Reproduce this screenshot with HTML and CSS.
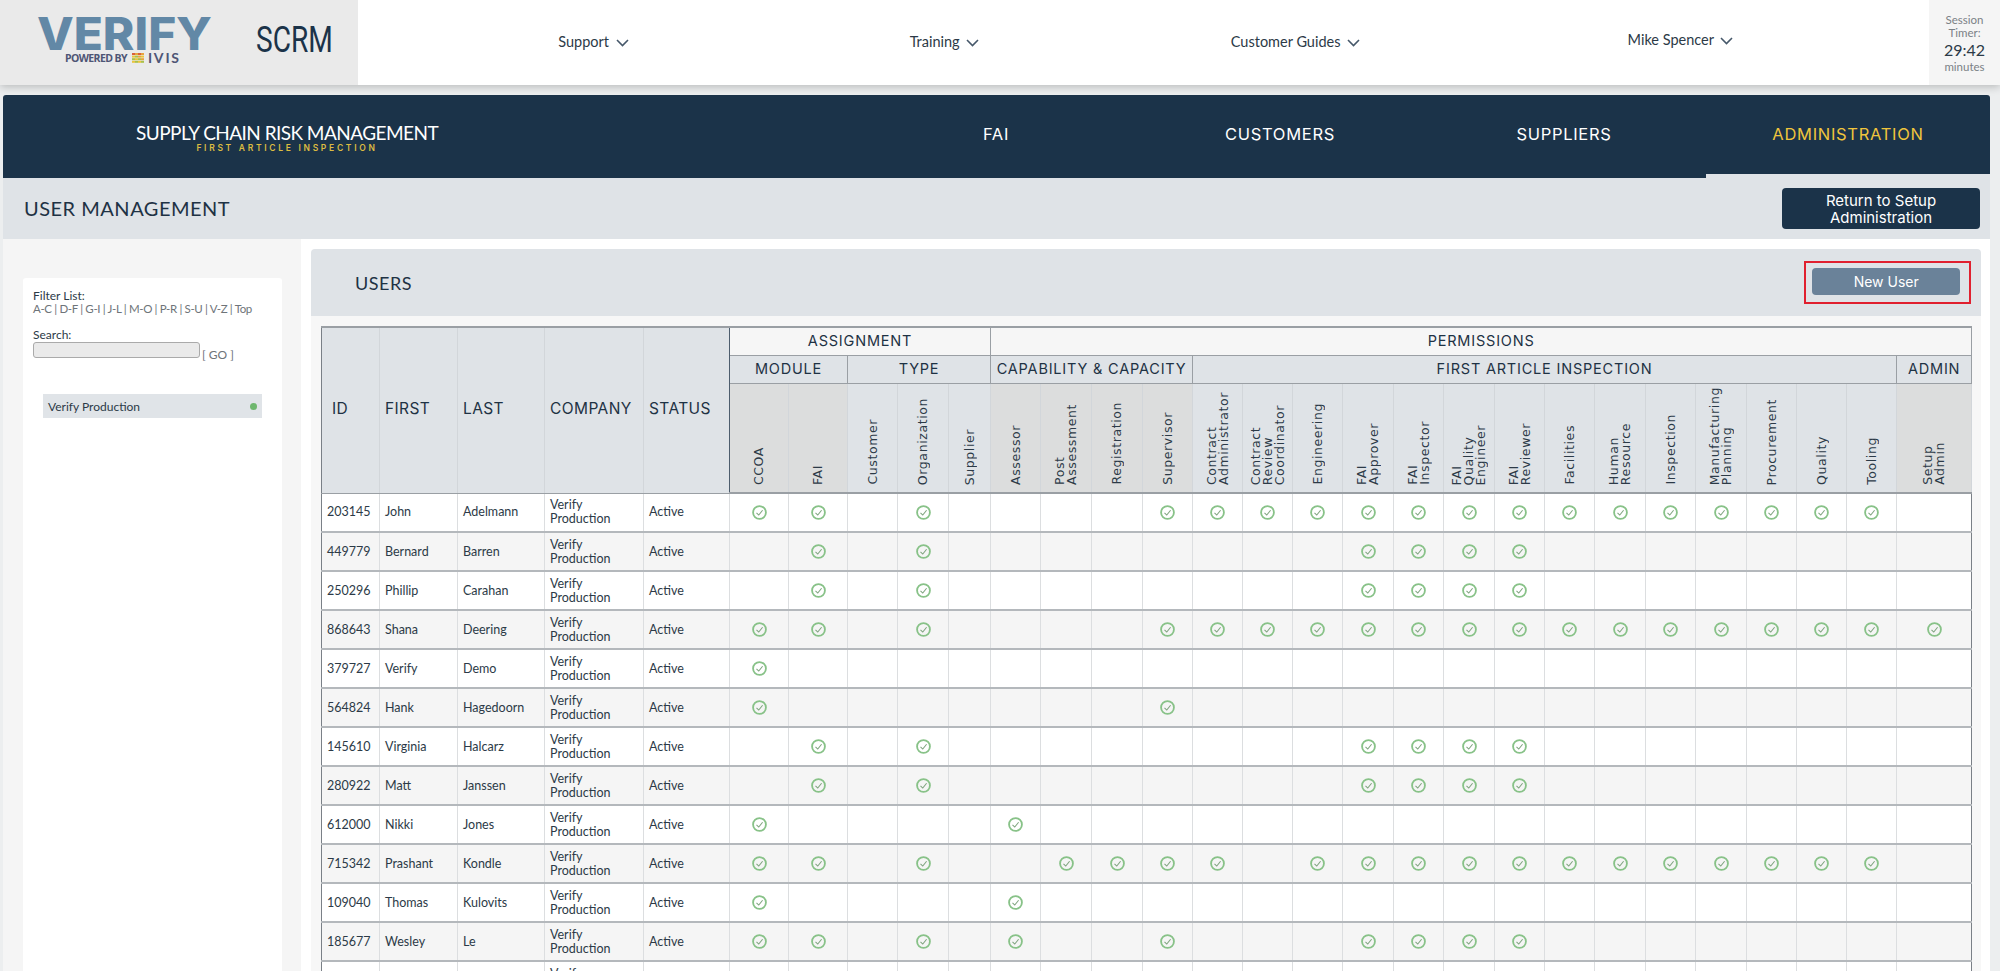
FILE: index.html

```html
<!DOCTYPE html>
<html lang="en">
<head>
    <meta charset="UTF-8">
    <meta name="viewport" content="width=device-width, initial-scale=1.0">
    <title>User Management</title>
    <link rel="stylesheet" href="styles.css">
</head>
<body>
    <svg class="defs" aria-hidden="true">
        <symbol id="ok" viewBox="0 0 14 14">
            <circle cx="7" cy="7" r="6" fill="none" stroke="#88c288" stroke-width="1.7"/>
            <path d="M4.2 7.3 6.3 9.4 9.9 4.9" fill="none" stroke="#7fa47f" stroke-width="1"/>
        </symbol>
    </svg>

    <header class="top">
        <div class="logo">
            <div class="logo-mark">
                <svg class="verify" viewBox="0 0 175 34"><text x="0" y="33" textLength="175" lengthAdjust="spacingAndGlyphs">VERIFY</text></svg>
                <div class="powered">
                    <span class="powered-by">POWERED BY</span>
                    <svg class="ivis-mark" viewBox="0 0 12 10">
                        <rect width="3" height="2" fill="#d9603b"/><rect x="3" width="3" height="2" fill="#e9a33c"/><rect x="6" width="3" height="2" fill="#d9603b"/><rect x="9" width="3" height="2" fill="#e9a33c"/>
                        <rect y="2.6" width="3" height="2" fill="#e9c53c"/><rect x="3" y="2.6" width="3" height="2" fill="#a9c04a"/><rect x="6" y="2.6" width="3" height="2" fill="#e9a33c"/><rect x="9" y="2.6" width="3" height="2" fill="#e9c53c"/>
                        <rect y="5.2" width="3" height="2" fill="#a9c04a"/><rect x="3" y="5.2" width="3" height="2" fill="#e9c53c"/><rect x="6" y="5.2" width="3" height="2" fill="#a9c04a"/><rect x="9" y="5.2" width="3" height="2" fill="#e9a33c"/>
                        <rect y="7.8" width="3" height="2" fill="#e9c53c"/><rect x="3" y="7.8" width="3" height="2" fill="#a9c04a"/><rect x="6" y="7.8" width="3" height="2" fill="#e9c53c"/><rect x="9" y="7.8" width="3" height="2" fill="#a9c04a"/>
                    </svg>
                    <span class="ivis">IVIS</span>
                </div>
            </div>
            <span class="scrm">SCRM</span>
        </div>
        <nav class="top-nav">
            <a>Support <svg class="chev" viewBox="0 0 13 8"><path d="M1 1l5.5 5.5L12 1"/></svg></a>
            <a>Training <svg class="chev" viewBox="0 0 13 8"><path d="M1 1l5.5 5.5L12 1"/></svg></a>
            <a>Customer Guides <svg class="chev" viewBox="0 0 13 8"><path d="M1 1l5.5 5.5L12 1"/></svg></a>
            <a class="user">Mike Spencer <svg class="chev" viewBox="0 0 13 8"><path d="M1 1l5.5 5.5L12 1"/></svg></a>
        </nav>
        <div class="session">
            <span>Session<br>Timer:</span>
            <strong>29:42</strong>
            <span>minutes</span>
        </div>
    </header>

    <div class="page">
        <nav class="main-nav">
            <div class="brand">
                <div class="brand-name">SUPPLY CHAIN RISK MANAGEMENT</div>
                <div class="brand-sub">FIRST ARTICLE INSPECTION</div>
            </div>
            <a class="tab">FAI</a>
            <a class="tab">CUSTOMERS</a>
            <a class="tab">SUPPLIERS</a>
            <a class="tab active">ADMINISTRATION</a>
        </nav>

        <div class="sub-bar">
            <h1>USER MANAGEMENT</h1>
            <button class="btn-dark">Return to Setup Administration</button>
        </div>

        <div class="content">
            <aside class="side">
                <div class="side-card">
                    <div class="filter">
                        <div class="label">Filter List:</div>
                        <div class="letters">A-C | D-F | G-I | J-L | M-O | P-R | S-U | V-Z | Top</div>
                    </div>
                    <div class="label search-label">Search:</div>
                    <div class="search"><input type="text"><span>[ GO ]</span></div>
                    <div class="site"><span>Verify Production</span><i class="dot"></i></div>
                </div>
            </aside>

            <main class="main">
                <div class="panel-head">
                    <h2>USERS</h2>
                    <div class="marked"><button class="btn-new">New User</button></div>
                </div>
                <div class="table-wrap">
                    <table class="users">
                        <colgroup>
                            <col class="w58"><col class="w78"><col class="w87"><col class="w99"><col class="w86">
                            <col class="w59"><col class="w59"><col class="w50"><col class="w51"><col class="w42">
                            <col class="w50"><col class="w51"><col class="w51"><col class="w50"><col class="w50"><col class="w50">
                            <col class="w50"><col class="w51"><col class="w50"><col class="w51"><col class="w50"><col class="w50">
                            <col class="w51"><col class="w50"><col class="w51"><col class="w50"><col class="w50"><col class="w50">
                            <col class="w75">
                        </colgroup>
                        <thead>
                            <tr class="h1">
                                <th class="big" rowspan="3">ID</th>
                                <th class="big" rowspan="3">FIRST</th>
                                <th class="big" rowspan="3">LAST</th>
                                <th class="big" rowspan="3">COMPANY</th>
                                <th class="big" rowspan="3">STATUS</th>
                                <th class="grp" colspan="5">ASSIGNMENT</th>
                                <th class="grp" colspan="19">PERMISSIONS</th>
                            </tr>
                            <tr class="h2">
                                <th colspan="2">MODULE</th>
                                <th colspan="3">TYPE</th>
                                <th colspan="4">CAPABILITY &amp; CAPACITY</th>
                                <th colspan="14">FIRST ARTICLE INSPECTION</th>
                                <th>ADMIN</th>
                            </tr>
                            <tr class="h3">
                                <th class="tint"><span>CCOA</span></th>
                                <th class="tint"><span>FAI</span></th>
                                <th><span>Customer</span></th>
                                <th><span>Organization</span></th>
                                <th><span>Supplier</span></th>
                                <th class="tint"><span>Assessor</span></th>
                                <th class="tint"><span>Post<br>Assessment</span></th>
                                <th class="tint"><span>Registration</span></th>
                                <th class="tint"><span>Supervisor</span></th>
                                <th><span>Contract<br>Administrator</span></th>
                                <th><span>Contract<br>Review<br>Coordinator</span></th>
                                <th><span>Engineering</span></th>
                                <th><span>FAI<br>Approver</span></th>
                                <th><span>FAI<br>Inspector</span></th>
                                <th><span>FAI<br>Quality<br>Engineer</span></th>
                                <th><span>FAI<br>Reviewer</span></th>
                                <th><span>Facilities</span></th>
                                <th><span>Human<br>Resource</span></th>
                                <th><span>Inspection</span></th>
                                <th><span>Manufacturing<br>Planning</span></th>
                                <th><span>Procurement</span></th>
                                <th><span>Quality</span></th>
                                <th><span>Tooling</span></th>
                                <th class="tint"><span>Setup<br>Admin</span></th>
                            </tr>
                        </thead>
                        <tbody>
                            <tr><td>203145</td><td>John</td><td>Adelmann</td><td>Verify Production</td><td>Active</td>
                                <td><svg class="ok"><use href="#ok"/></svg></td><td><svg class="ok"><use href="#ok"/></svg></td><td></td><td><svg class="ok"><use href="#ok"/></svg></td><td></td>
                                <td></td><td></td><td></td><td><svg class="ok"><use href="#ok"/></svg></td>
                                <td><svg class="ok"><use href="#ok"/></svg></td><td><svg class="ok"><use href="#ok"/></svg></td><td><svg class="ok"><use href="#ok"/></svg></td><td><svg class="ok"><use href="#ok"/></svg></td><td><svg class="ok"><use href="#ok"/></svg></td><td><svg class="ok"><use href="#ok"/></svg></td><td><svg class="ok"><use href="#ok"/></svg></td><td><svg class="ok"><use href="#ok"/></svg></td><td><svg class="ok"><use href="#ok"/></svg></td><td><svg class="ok"><use href="#ok"/></svg></td><td><svg class="ok"><use href="#ok"/></svg></td><td><svg class="ok"><use href="#ok"/></svg></td><td><svg class="ok"><use href="#ok"/></svg></td><td><svg class="ok"><use href="#ok"/></svg></td>
                                <td></td></tr>
                            <tr><td>449779</td><td>Bernard</td><td>Barren</td><td>Verify Production</td><td>Active</td>
                                <td></td><td><svg class="ok"><use href="#ok"/></svg></td><td></td><td><svg class="ok"><use href="#ok"/></svg></td><td></td>
                                <td></td><td></td><td></td><td></td>
                                <td></td><td></td><td></td><td><svg class="ok"><use href="#ok"/></svg></td><td><svg class="ok"><use href="#ok"/></svg></td><td><svg class="ok"><use href="#ok"/></svg></td><td><svg class="ok"><use href="#ok"/></svg></td><td></td><td></td><td></td><td></td><td></td><td></td><td></td>
                                <td></td></tr>
                            <tr><td>250296</td><td>Phillip</td><td>Carahan</td><td>Verify Production</td><td>Active</td>
                                <td></td><td><svg class="ok"><use href="#ok"/></svg></td><td></td><td><svg class="ok"><use href="#ok"/></svg></td><td></td>
                                <td></td><td></td><td></td><td></td>
                                <td></td><td></td><td></td><td><svg class="ok"><use href="#ok"/></svg></td><td><svg class="ok"><use href="#ok"/></svg></td><td><svg class="ok"><use href="#ok"/></svg></td><td><svg class="ok"><use href="#ok"/></svg></td><td></td><td></td><td></td><td></td><td></td><td></td><td></td>
                                <td></td></tr>
                            <tr><td>868643</td><td>Shana</td><td>Deering</td><td>Verify Production</td><td>Active</td>
                                <td><svg class="ok"><use href="#ok"/></svg></td><td><svg class="ok"><use href="#ok"/></svg></td><td></td><td><svg class="ok"><use href="#ok"/></svg></td><td></td>
                                <td></td><td></td><td></td><td><svg class="ok"><use href="#ok"/></svg></td>
                                <td><svg class="ok"><use href="#ok"/></svg></td><td><svg class="ok"><use href="#ok"/></svg></td><td><svg class="ok"><use href="#ok"/></svg></td><td><svg class="ok"><use href="#ok"/></svg></td><td><svg class="ok"><use href="#ok"/></svg></td><td><svg class="ok"><use href="#ok"/></svg></td><td><svg class="ok"><use href="#ok"/></svg></td><td><svg class="ok"><use href="#ok"/></svg></td><td><svg class="ok"><use href="#ok"/></svg></td><td><svg class="ok"><use href="#ok"/></svg></td><td><svg class="ok"><use href="#ok"/></svg></td><td><svg class="ok"><use href="#ok"/></svg></td><td><svg class="ok"><use href="#ok"/></svg></td><td><svg class="ok"><use href="#ok"/></svg></td>
                                <td><svg class="ok"><use href="#ok"/></svg></td></tr>
                            <tr><td>379727</td><td>Verify</td><td>Demo</td><td>Verify Production</td><td>Active</td>
                                <td><svg class="ok"><use href="#ok"/></svg></td><td></td><td></td><td></td><td></td>
                                <td></td><td></td><td></td><td></td>
                                <td></td><td></td><td></td><td></td><td></td><td></td><td></td><td></td><td></td><td></td><td></td><td></td><td></td><td></td>
                                <td></td></tr>
                            <tr><td>564824</td><td>Hank</td><td>Hagedoorn</td><td>Verify Production</td><td>Active</td>
                                <td><svg class="ok"><use href="#ok"/></svg></td><td></td><td></td><td></td><td></td>
                                <td></td><td></td><td></td><td><svg class="ok"><use href="#ok"/></svg></td>
                                <td></td><td></td><td></td><td></td><td></td><td></td><td></td><td></td><td></td><td></td><td></td><td></td><td></td><td></td>
                                <td></td></tr>
                            <tr><td>145610</td><td>Virginia</td><td>Halcarz</td><td>Verify Production</td><td>Active</td>
                                <td></td><td><svg class="ok"><use href="#ok"/></svg></td><td></td><td><svg class="ok"><use href="#ok"/></svg></td><td></td>
                                <td></td><td></td><td></td><td></td>
                                <td></td><td></td><td></td><td><svg class="ok"><use href="#ok"/></svg></td><td><svg class="ok"><use href="#ok"/></svg></td><td><svg class="ok"><use href="#ok"/></svg></td><td><svg class="ok"><use href="#ok"/></svg></td><td></td><td></td><td></td><td></td><td></td><td></td><td></td>
                                <td></td></tr>
                            <tr><td>280922</td><td>Matt</td><td>Janssen</td><td>Verify Production</td><td>Active</td>
                                <td></td><td><svg class="ok"><use href="#ok"/></svg></td><td></td><td><svg class="ok"><use href="#ok"/></svg></td><td></td>
                                <td></td><td></td><td></td><td></td>
                                <td></td><td></td><td></td><td><svg class="ok"><use href="#ok"/></svg></td><td><svg class="ok"><use href="#ok"/></svg></td><td><svg class="ok"><use href="#ok"/></svg></td><td><svg class="ok"><use href="#ok"/></svg></td><td></td><td></td><td></td><td></td><td></td><td></td><td></td>
                                <td></td></tr>
                            <tr><td>612000</td><td>Nikki</td><td>Jones</td><td>Verify Production</td><td>Active</td>
                                <td><svg class="ok"><use href="#ok"/></svg></td><td></td><td></td><td></td><td></td>
                                <td><svg class="ok"><use href="#ok"/></svg></td><td></td><td></td><td></td>
                                <td></td><td></td><td></td><td></td><td></td><td></td><td></td><td></td><td></td><td></td><td></td><td></td><td></td><td></td>
                                <td></td></tr>
                            <tr><td>715342</td><td>Prashant</td><td>Kondle</td><td>Verify Production</td><td>Active</td>
                                <td><svg class="ok"><use href="#ok"/></svg></td><td><svg class="ok"><use href="#ok"/></svg></td><td></td><td><svg class="ok"><use href="#ok"/></svg></td><td></td>
                                <td></td><td><svg class="ok"><use href="#ok"/></svg></td><td><svg class="ok"><use href="#ok"/></svg></td><td><svg class="ok"><use href="#ok"/></svg></td>
                                <td><svg class="ok"><use href="#ok"/></svg></td><td></td><td><svg class="ok"><use href="#ok"/></svg></td><td><svg class="ok"><use href="#ok"/></svg></td><td><svg class="ok"><use href="#ok"/></svg></td><td><svg class="ok"><use href="#ok"/></svg></td><td><svg class="ok"><use href="#ok"/></svg></td><td><svg class="ok"><use href="#ok"/></svg></td><td><svg class="ok"><use href="#ok"/></svg></td><td><svg class="ok"><use href="#ok"/></svg></td><td><svg class="ok"><use href="#ok"/></svg></td><td><svg class="ok"><use href="#ok"/></svg></td><td><svg class="ok"><use href="#ok"/></svg></td><td><svg class="ok"><use href="#ok"/></svg></td>
                                <td></td></tr>
                            <tr><td>109040</td><td>Thomas</td><td>Kulovits</td><td>Verify Production</td><td>Active</td>
                                <td><svg class="ok"><use href="#ok"/></svg></td><td></td><td></td><td></td><td></td>
                                <td><svg class="ok"><use href="#ok"/></svg></td><td></td><td></td><td></td>
                                <td></td><td></td><td></td><td></td><td></td><td></td><td></td><td></td><td></td><td></td><td></td><td></td><td></td><td></td>
                                <td></td></tr>
                            <tr><td>185677</td><td>Wesley</td><td>Le</td><td>Verify Production</td><td>Active</td>
                                <td><svg class="ok"><use href="#ok"/></svg></td><td><svg class="ok"><use href="#ok"/></svg></td><td></td><td><svg class="ok"><use href="#ok"/></svg></td><td></td>
                                <td><svg class="ok"><use href="#ok"/></svg></td><td></td><td></td><td><svg class="ok"><use href="#ok"/></svg></td>
                                <td></td><td></td><td></td><td><svg class="ok"><use href="#ok"/></svg></td><td><svg class="ok"><use href="#ok"/></svg></td><td><svg class="ok"><use href="#ok"/></svg></td><td><svg class="ok"><use href="#ok"/></svg></td><td></td><td></td><td></td><td></td><td></td><td></td><td></td>
                                <td></td></tr>
                            <tr><td></td><td></td><td></td><td>Verify Production</td><td>Active</td>
                                <td></td><td></td><td></td><td></td><td></td>
                                <td></td><td></td><td></td><td></td>
                                <td></td><td></td><td></td><td></td><td></td><td></td><td></td><td></td><td></td><td></td><td></td><td></td><td></td><td></td>
                                <td></td></tr>
                        </tbody>
                    </table>
                </div>
            </main>
        </div>
    </div>
</body>
</html>
```

FILE: styles.css

```css
* {
    box-sizing: border-box;
}
html, body {
    height: 971px;
    overflow: hidden;
}
body {
    margin: 0;
    background: #eceeef;
    font-family: "Lato", "Liberation Sans", sans-serif;
    color: #2c3a47;
}
a {
    color: inherit;
    text-decoration: none;
}
.defs {
    display: none;
}

/* top white bar */
.top {
    display: flex;
    height: 85px;
    background: #fff;
    box-shadow: 0 2px 8px rgba(0, 0, 0, .22);
    position: relative;
}
.logo {
    width: 358px;
    background: #eaeaea;
    display: flex;
    padding: 17px 0 0 37px;
}
.logo-mark {
    width: 175px;
}
.verify {
    display: block;
    width: 175px;
    height: 34px;
    overflow: visible;
}
.verify text {
    font-family: "Inter", "Liberation Sans", sans-serif;
    font-weight: 800;
    font-size: 45px;
    fill: #6288a6;
}
.powered {
    display: flex;
    align-items: center;
    margin: 1px 0 0 28px;
    height: 11px;
    color: #4e5575;
}
.powered-by {
    font: 700 10.5px "Open Sans", sans-serif;
    letter-spacing: -.6px;
    white-space: nowrap;
}
.ivis-mark {
    width: 12px;
    height: 10px;
    margin: 0 4px 0 5px;
}
.ivis {
    font-size: 14px;
    font-weight: 700;
    letter-spacing: 1.8px;
}
.scrm {
    font-family: "Roboto", sans-serif;
    font-weight: 400;
    font-size: 36px;
    line-height: 36px;
    margin: 5px 0 0 44px;
    color: #1b3349;
    transform: scaleX(.78);
    transform-origin: left;
}
.top-nav {
    flex: 1;
    display: grid;
    grid-template-columns: 351px 351px 351px 1fr;
    padding: 0 39px 0 60px;
    align-items: center;
    text-align: center;
    font-size: 14.5px;
}
.top-nav a {
    display: block;
    margin-top: -3px;
}
.top-nav .user {
    margin-top: -7px;
}
.chev {
    width: 13px;
    height: 8px;
    margin-left: 3px;
    fill: none;
    stroke: #46586a;
    stroke-width: 1.6;
}
.session {
    width: 71px;
    background: #f5f5f5;
    display: flex;
    flex-direction: column;
    align-items: center;
    justify-content: center;
    text-align: center;
    font-size: 11.5px;
    line-height: 13px;
    color: #7b8186;
}
.session strong {
    font-size: 16px;
    font-weight: 400;
    line-height: 17px;
    color: #2c3a47;
    margin: 2px 0;
}

.page {
    margin: 10px 10px 0 3px;
}

/* navy nav */
.main-nav {
    display: flex;
    height: 83px;
    background: #1b3349;
    border-radius: 3px 3px 0 0;
    color: #fff;
}
.brand {
    width: 851px;
    padding: 28px 0 0 133px;
}
.brand-name {
    width: 302px;
    font-size: 19px;
    line-height: 20px;
    letter-spacing: -.55px;
    white-space: nowrap;
}
.brand-sub {
    width: 302px;
    text-align: center;
    font-family: "Inter", sans-serif;
    font-size: 8.5px;
    font-weight: 600;
    letter-spacing: 2.7px;
    line-height: 11px;
    color: #dcbc41;
}
.tab {
    width: 284px;
    text-align: center;
    font-family: "Inter", sans-serif;
    font-size: 16.5px;
    letter-spacing: .7px;
    line-height: 79px;
}
.tab.active {
    color: #f0c53c;
    border-bottom: 4px solid #dfe3e7;
}

.sub-bar {
    display: flex;
    justify-content: space-between;
    align-items: center;
    height: 61px;
    padding: 0 10px 0 21px;
    background: #dfe3e7;
}
.sub-bar h1 {
    margin: -2px 0 0;
    font-size: 20px;
    font-weight: 400;
    letter-spacing: .5px;
    color: #1e3244;
}
.btn-dark {
    width: 198px;
    height: 41px;
    padding: 0 25px;
    border: 0;
    border-radius: 4px;
    background: #1b3349;
    color: #fff;
    font: 15px/17px "Inter", sans-serif;
}

.content {
    display: flex;
    height: 732px;
    background: #fff;
}
.side {
    width: 298px;
    background: #f5f5f5;
    padding: 39px 19px 0 20px;
}
.side-card {
    height: 700px;
    background: #fff;
    padding: 11px 20px 0 10px;
    font-size: 12px;
    line-height: 13px;
    color: #6e7479;
    border-radius: 3px;
}
.label {
    color: #2c3a47;
}
.letters {
    white-space: nowrap;
    font-size: 11.5px;
    letter-spacing: -.35px;
}
.search-label {
    margin-top: 13px;
}
.search {
    display: flex;
    align-items: flex-end;
    margin-top: 1px;
}
.search input {
    width: 167px;
    height: 16px;
    background: #eaeaea;
    border: 1px solid #aaa;
    border-radius: 3px;
    padding: 0;
}
.search span {
    margin-left: 2px;
    margin-bottom: -3px;
}
.site {
    display: flex;
    justify-content: space-between;
    align-items: center;
    width: 219px;
    height: 24px;
    margin: 36px 0 0 10px;
    padding: 0 5px;
    background: #e0e4e8;
    color: #2c3a47;
}
.dot {
    width: 7px;
    height: 7px;
    border-radius: 50%;
    background: #6eb76e;
}

.main {
    flex: 1;
    padding: 10px 10px 0;
}
.panel-head {
    display: flex;
    justify-content: space-between;
    align-items: center;
    height: 67px;
    padding: 0 10px 0 44px;
    background: #dfe3e7;
    border-radius: 4px 4px 0 0;
}
.panel-head h2 {
    margin: 0;
    font-size: 18px;
    font-weight: 400;
    letter-spacing: .5px;
    color: #1e3244;
}
.marked {
    width: 167px;
    height: 43px;
    padding: 5px 9px 7px 6px;
    border: 2px solid #e0202f;
}
.btn-new {
    width: 148px;
    height: 27px;
    border: 0;
    border-radius: 4px;
    background: #6a8299;
    color: #fff;
    font: 14px "Inter", sans-serif;
}
.table-wrap {
    background: #f7f7f7;
    padding: 10px 9px 0 10px;
    height: 660px;
}

/* the grid */
.users {
    table-layout: fixed;
    border-collapse: collapse;
    width: 1650px;
}
.w42 { width: 42px; }
.w50 { width: 50px; }
.w51 { width: 51px; }
.w58 { width: 58px; }
.w59 { width: 59px; }
.w75 { width: 75px; }
.w78 { width: 78px; }
.w86 { width: 86px; }
.w87 { width: 87px; }
.w99 { width: 99px; }

.users th {
    padding: 0;
    font-weight: 400;
    background: #dfe3e7;
    border: 1px solid #9a9fa4;
    color: #1e3244;
}
.users .big {
    text-align: left;
    padding: 0 0 3px 5px;
    font-size: 15.5px;
    letter-spacing: .4px;
    border-top: 2px solid #9a9fa4;
    border-left-color: #d2d6da;
    border-right-color: #d2d6da;
}
.users .big:first-child {
    padding-left: 10px;
    border-left: 1px solid #7a8087;
}
.users .big:nth-child(5) {
    border-right: 1px solid #4d5d6d;
}
.h1 th, .h2 th {
    font-family: "Inter", sans-serif;
    font-size: 14.5px;
    letter-spacing: .8px;
    padding-bottom: 1px;
}
.h1 {
    height: 28px;
}
.h2 {
    height: 28px;
}
.users .grp {
    background: #f6f6f6;
    border-top: 2px solid #9a9fa4;
    padding-bottom: 2px;
}
.h3 {
    height: 110px;
}
.users .h3 th {
    vertical-align: bottom;
    text-align: center;
    padding-bottom: 4px;
    border-left-color: #d2d6da;
    border-right-color: #d2d6da;
    border-bottom: 2px solid #9a9fa4;
}
.users .h3 th.tint {
    background: #dcdddd;
}
.h3 span {
    display: inline-block;
    writing-mode: vertical-rl;
    transform: rotate(180deg);
    text-align: left;
    font-family: "DejaVu Sans", sans-serif;
    font-size: 12.5px;
    line-height: 12px;
    letter-spacing: .6px;
    color: #2c3a47;
}

.users td {
    height: 39px;
    padding: 0 5px;
    font-size: 12.5px;
    line-height: 14px;
    background: #fff;
    border-left: 1px solid #dcdee0;
    border-right: 1px solid #dcdee0;
    border-bottom: 2px solid #b4b8bc;
    text-align: center;
    overflow: hidden;
}
.users tbody tr:nth-child(even) td {
    background: #f5f5f5;
}
.users td:nth-child(-n+5) {
    text-align: left;
}
.users td:first-child {
    border-left: 1px solid #7a8087;
}
.users td:last-child {
    border-right: 1px solid #7a8087;
}

/* column rules: group edges are dark, every second permission is mid grey */
.users td:nth-child(6), .users td:nth-child(8), .users td:nth-child(11),
.users td:nth-child(15), .users td:nth-child(29),
.users .h3 th:nth-child(1), .users .h3 th:nth-child(3), .users .h3 th:nth-child(6),
.users .h3 th:nth-child(10), .users .h3 th:nth-child(24) {
    border-left: 1px solid #4d5d6d;
}
.users td:nth-child(16), .users td:nth-child(18), .users td:nth-child(20), .users td:nth-child(22),
.users td:nth-child(24), .users td:nth-child(26), .users td:nth-child(28),
.users .h3 th:nth-child(11), .users .h3 th:nth-child(13), .users .h3 th:nth-child(15), .users .h3 th:nth-child(17),
.users .h3 th:nth-child(19), .users .h3 th:nth-child(21), .users .h3 th:nth-child(23) {
    border-left: 1px solid #999da1;
}
.ok {
    display: block;
    width: 15px;
    height: 15px;
    margin: 0 auto;
}
```
